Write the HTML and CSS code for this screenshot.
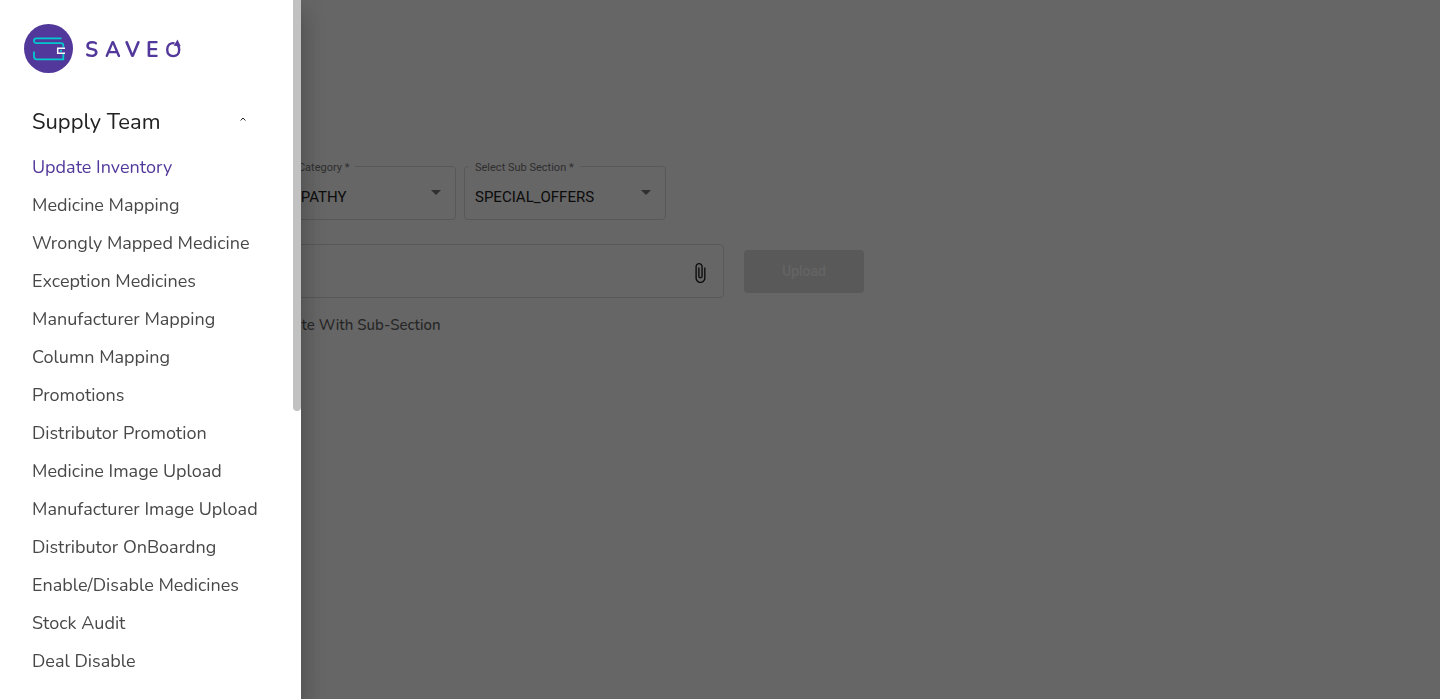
FILE: index.html
```html
<!DOCTYPE html>
<html lang="en">
<head>
<meta charset="utf-8">
<meta name="viewport" content="width=device-width, initial-scale=1">
<title>Saveo - Update Inventory</title>
<link rel="stylesheet" href="styles.css">
</head>
<body>
<main class="page">
  <form class="upload-form">
    <div class="row selects">
      <fieldset class="outlined">
        <legend><label for="category">Select Category *</label></legend>
        <select id="category"><option>ALLOPATHY</option></select>
        <svg class="arrow" viewBox="0 0 10 5" aria-hidden="true"><path d="M0 0h10L5 5z"/></svg>
      </fieldset>
      <fieldset class="outlined">
        <legend><label for="subsection">Select Sub Section *</label></legend>
        <select id="subsection"><option>SPECIAL_OFFERS</option></select>
        <svg class="arrow" viewBox="0 0 10 5" aria-hidden="true"><path d="M0 0h10L5 5z"/></svg>
      </fieldset>
    </div>
    <div class="row files">
      <div class="file-box">
        <input type="text" aria-label="File">
        <svg class="clip" viewBox="0 0 24 24" aria-hidden="true"><path d="M16.500 6v11.500c0 2.210-1.790 4-4 4s-4-1.790-4-4V5c0-1.380 1.120-2.500 2.500-2.500s2.500 1.120 2.500 2.500v10.500c0 .55-.45 1-1 1s-1-.45-1-1V6H10v9.500c0 1.380 1.120 2.500 2.500 2.500s2.500-1.120 2.500-2.500V5c0-2.210-1.790-4-4-4S7 2.790 7 5v12.500c0 3.040 2.460 5.500 5.500 5.500s5.500-2.460 5.500-5.500V6h-1.500z"/></svg>
      </div>
      <button class="upload" type="button" disabled>Upload</button>
    </div>
    <label class="check"><input type="checkbox">Update With Sub-Section</label>
  </form>
</main>
<div class="backdrop"></div>
<aside class="drawer">
  <svg class="logo" viewBox="0 0 160 49" role="img" aria-label="Saveo">
    <circle cx="24.500" cy="24.500" r="24.500" fill="#52389a"/>
    <g fill="none" stroke-width="1.800" stroke="#00c9ce">
      <path d="M37.500 14.300H12.300q-2.300 0-2.300 2.400t2.300 2.400H37q2.300 0 2.300 2.300v2M10 27.500v5q0 2.800 2.800 2.800H39.300v-5.300"/>
      <path d="M41 24.300h-7.300v5H41" stroke="#fff" stroke-width="1.500"/>
    </g>
    <circle cx="37" cy="26.800" r="1.100" fill="#00c9ce"/>
    <text class="wordmark" x="61 81 101 122" y="33">SAVE</text>
    <path d="M150.500 19.300c-4-.9-7.300 1.600-7.300 6.200 0 4.200 2.300 6.600 6 6.600s6-2.500 6-6.400c0-2-.5-3.400-1.300-4.500" fill="none" stroke="#52389a" stroke-width="2.400"/>
    <path d="M153.500 15.500l3.200 6.700-7-.4z" fill="#52389a"/>
  </svg>
  <nav class="menu">
    <button class="group" type="button" aria-expanded="true">Supply Team
      <svg viewBox="0 0 6 4" aria-hidden="true"><path d="M.6 3.500L3 1l2.400 2.500"/></svg>
    </button>
    <a class="item active" href="#">Update Inventory</a>
    <a class="item" href="#">Medicine Mapping</a>
    <a class="item" href="#">Wrongly Mapped Medicine</a>
    <a class="item" href="#">Exception Medicines</a>
    <a class="item" href="#">Manufacturer Mapping</a>
    <a class="item" href="#">Column Mapping</a>
    <a class="item" href="#">Promotions</a>
    <a class="item" href="#">Distributor Promotion</a>
    <a class="item" href="#">Medicine Image Upload</a>
    <a class="item" href="#">Manufacturer Image Upload</a>
    <a class="item" href="#">Distributor OnBoardng</a>
    <a class="item" href="#">Enable/Disable Medicines</a>
    <a class="item" href="#">Stock Audit</a>
    <a class="item" href="#">Deal Disable</a>
  </nav>
  <div class="thumb"></div>
</aside>
</body>
</html>
```
FILE: styles.css
```css
* { box-sizing: border-box; }

body {
  margin: 0;
  background: #fff;
  font-family: Roboto, "Liberation Sans", sans-serif;
}

.page { padding: 157px 24px 24px 254px; }

.upload-form {
  display: flex;
  flex-direction: column;
  max-width: 610px;
}

.row { display: flex; }
.selects { gap: 8px; }

.outlined {
  display: flex;
  align-items: center;
  width: 202px;
  height: 63px;
  margin: 0;
  padding: 0 14px 0 4px;
  border: 1px solid #dcdcdc;
  border-radius: 4px;
}

.outlined legend {
  padding: 4px 6px 0;
  font-size: 11px;
  line-height: 14px;
  color: #757575;
}

.outlined select {
  flex: 1;
  min-width: 0;
  padding: 0 6px;
  border: 0;
  background: none;
  appearance: none;
  font: 15px Roboto, sans-serif;
  color: #212121;
}

.arrow {
  width: 10px;
  height: 5px;
  margin-bottom: 10px;
  fill: #757575;
}

.files {
  align-items: center;
  gap: 20px;
  margin-top: 24px;
}

.file-box {
  display: flex;
  align-items: center;
  flex: 1;
  height: 54px;
  padding: 0 12px;
  border: 1px solid #dcdcdc;
  border-radius: 4px;
}

.file-box input {
  flex: 1;
  min-width: 0;
  border: 0;
  background: none;
}

.clip {
  width: 22px;
  height: 22px;
  margin-top: 4px;
  fill: #212121;
}

.upload {
  width: 120px;
  height: 43px;
  border: 0;
  border-radius: 4px;
  background: #dedede;
  color: #f8f8f8;
  font: 500 14px Roboto, sans-serif;
}

.check {
  display: flex;
  align-items: center;
  gap: 8px;
  margin: 16px 0 0 -10px;
  font: 500 15px/22px Nunito, "Open Sans", sans-serif;
  color: #616161;
}

.check input { margin: 0; }

.backdrop {
  position: fixed;
  inset: 0;
  background: rgba(0, 0, 0, 0.6);
}

.drawer {
  position: fixed;
  inset: 0 auto 0 0;
  width: 301px;
  padding: 24px 8px 24px 24px;
  overflow: hidden;
  background: #fff;
  box-shadow: 0 8px 10px -5px rgba(0, 0, 0, 0.2), 0 16px 24px 2px rgba(0, 0, 0, 0.14), 0 6px 30px 5px rgba(0, 0, 0, 0.12);
}

.logo {
  display: block;
  width: 160px;
  height: 49px;
}

.wordmark {
  font: 700 21px Nunito, Lato, sans-serif;
  fill: #52389a;
}

.menu {
  display: flex;
  flex-direction: column;
  padding: 23px 8px 0;
  font-family: Nunito, "Open Sans", sans-serif;
}

.group {
  display: flex;
  align-items: center;
  justify-content: space-between;
  height: 52px;
  padding: 0 39px 0 0;
  border: 0;
  background: none;
  font: 22px Nunito, "Open Sans", sans-serif;
  color: #212121;
  text-align: left;
}

.group svg {
  width: 6px;
  height: 4px;
  margin-bottom: 6px;
  fill: none;
  stroke: #212121;
}

.item {
  font-size: 18px;
  line-height: 38px;
  color: #484848;
  text-decoration: none;
  white-space: nowrap;
}

.active { color: #52389a; }

.thumb {
  position: absolute;
  top: 0;
  right: 0;
  width: 8px;
  height: 411px;
  border-radius: 0 0 4px 4px;
  background: #c1c1c1;
}
```
